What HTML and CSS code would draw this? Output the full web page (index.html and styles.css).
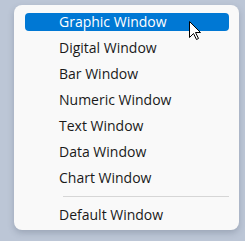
FILE: index.html
```html
<!DOCTYPE html>
<html lang="en">
<head>
  <meta charset="UTF-8">
  <title>Window menu</title>
  <link rel="stylesheet" href="styles.css">
</head>
<body>
  <div class="menu">
    <div class="item active"><span class="label">Graphic Window</span></div>
    <div class="item"><span class="label">Digital Window</span></div>
    <div class="item"><span class="label">Bar Window</span></div>
    <div class="item"><span class="label">Numeric Window</span></div>
    <div class="item"><span class="label">Text Window</span></div>
    <div class="item"><span class="label">Data Window</span></div>
    <div class="item"><span class="label">Chart Window</span></div>
    <div class="separator"></div>
    <div class="item"><span class="label">Default Window</span></div>

    <svg class="cursor" width="13" height="20" viewBox="0 0 13 20">
      <path d="M0.5 0.5 L0.5 16.5 L4.5 12.5 L7.5 18.5 L9.5 17.5 L6.5 11.5 L11.5 11.5 Z" fill="#fff" stroke="#000" stroke-width="1"/>
    </svg>
  </div>
</body>
</html>
```
FILE: styles.css
```css
body {
  margin: 0;
  width: 245px;
  height: 241px;
  background: #bcc6d6;
  font-family: "Open Sans", "Noto Sans", sans-serif;
  font-size: 14px;
  color: #1a1a1a;
  overflow: hidden;
}

.menu {
  position: relative;
  margin: 5px 0 0 14px;
  width: 225px;
  box-sizing: border-box;
  padding: 4px 10px 2px 11px;
  background: #f9f9f9;
  border-radius: 8px;
  box-shadow: 0 3px 6px rgba(60, 70, 90, 0.25);
}

.item {
  height: 26px;
  padding: 4px 0;
  box-sizing: border-box;
}

.label {
  display: block;
  height: 18px;
  line-height: 18px;
  padding-left: 34px;
  border-radius: 4px;
}

.item.active .label {
  background: #0078d4;
  color: #fff;
}

.separator {
  height: 11px;
  margin-left: 38px;
  position: relative;
}

.separator::after {
  content: "";
  position: absolute;
  left: 0;
  right: 0;
  top: 5px;
  height: 1px;
  background: #d6d6d6;
}

.cursor {
  position: absolute;
  left: 175px;
  top: 16px;
}
```
